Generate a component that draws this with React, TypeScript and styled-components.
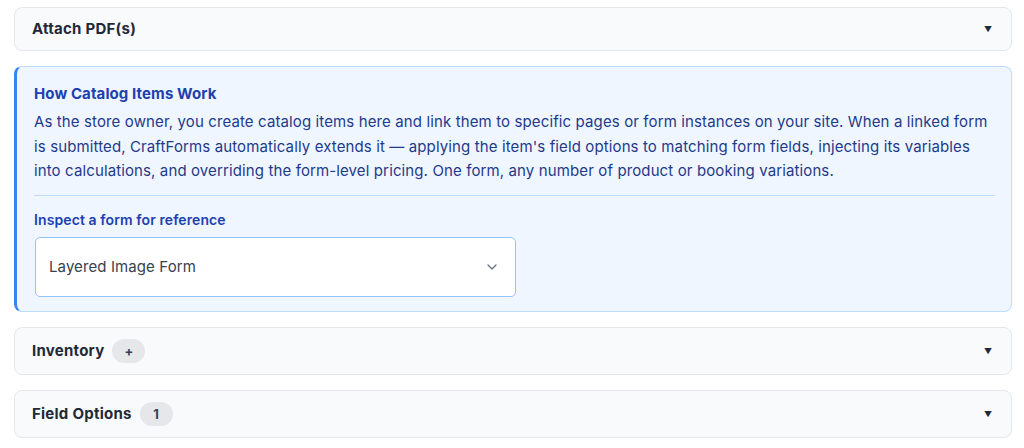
import React from "react";
import styled, { createGlobalStyle } from "styled-components";

const Global = createGlobalStyle`
  html, body { margin: 0; padding: 0; background: #ffffff; }
  body { font-family: Inter, "Noto Sans", "Liberation Sans", sans-serif; -webkit-font-smoothing: antialiased; }
  * { box-sizing: border-box; }
`;

const Page = styled.div`
  display: flex;
  flex-direction: column;
  gap: 15px;
  padding: 7px 12px 12px 14px;
`;

const Card = styled.div`
  border: 1px solid #e5e7eb;
  border-radius: 8px;
  background: #f9fafb;
`;

const Header = styled.div`
  display: flex;
  align-items: center;
  justify-content: space-between;
  padding: 11px 18px 11px 17px;
  min-height: 42px;
`;

const HeaderLeft = styled.div`
  display: flex;
  align-items: center;
  gap: 8px;
`;

const Title = styled.span`
  font-size: 15px;
  font-weight: 700;
  color: #1f2937;
  line-height: 20px;
  letter-spacing: 0.25px;
`;

const Badge = styled.span`
  display: inline-flex;
  align-items: center;
  justify-content: center;
  min-width: 33px;
  height: 24px;
  padding: 0 10px;
  border-radius: 999px;
  background: #e5e7eb;
  color: #374151;
  font-size: 13px;
  font-weight: 700;
`;

const Caret = styled.span`
  font-size: 8px;
  color: #1f2937;
  margin-right: 1px;
`;

const InfoBox = styled.div`
  background: #eff6ff;
  border: 1px solid #bfdbfe;
  border-left: 3px solid #3b82f6;
  border-radius: 8px;
  padding: 16px 16px 14px 17px;
`;

const InfoTitle = styled.div`
  font-size: 15px;
  font-weight: 700;
  color: #1e40af;
  line-height: 22px;
  margin-bottom: 5px;
  letter-spacing: 0.1px;
`;

const InfoText = styled.p`
  margin: 0;
  font-size: 15px;
  line-height: 24.5px;
  letter-spacing: 0.12px;
  color: #1e3a8a;
`;

const Divider = styled.hr`
  border: none;
  border-top: 1px solid #bfdbfe;
  margin: 11px 0 14px;
`;

const Label = styled.div`
  font-size: 14px;
  font-weight: 600;
  color: #1e40af;
  line-height: 20px;
  margin-bottom: 7px;
  letter-spacing: 0.1px;
`;

const Select = styled.div`
  width: 481px;
  height: 60px;
  margin-left: 1px;
  display: flex;
  align-items: center;
  justify-content: space-between;
  padding: 0 15px 0 13px;
  background: #ffffff;
  border: 1px solid #93c5fd;
  border-radius: 5px;
  font-size: 15px;
  letter-spacing: 0.1px;
  color: #374151;
`;

const Chevron = () => (
  <svg width="16" height="16" viewBox="0 0 24 24" fill="none" stroke="#6b7280" strokeWidth="2" strokeLinecap="round" strokeLinejoin="round">
    <path d="M6 9l6 6 6-6" />
  </svg>
);

const Section = ({ title, badge }: { title: string; badge?: string }) => (
  <Card>
    <Header>
      <HeaderLeft>
        <Title>{title}</Title>
        {badge && <Badge>{badge}</Badge>}
      </HeaderLeft>
      <Caret>▼</Caret>
    </Header>
  </Card>
);

export default function App() {
  return (
    <>
      <Global />
      <Page>
        <Section title="Attach PDF(s)" />
        <InfoBox>
          <InfoTitle>How Catalog Items Work</InfoTitle>
          <InfoText>
            As the store owner, you create catalog items here and link them to specific pages or form instances on your site. When a linked form is submitted, CraftForms automatically extends it — applying the item's field options to matching form fields, injecting its variables into calculations, and overriding the form-level pricing. One form, any number of product or booking variations.
          </InfoText>
          <Divider />
          <Label>Inspect a form for reference</Label>
          <Select>
            <span>Layered Image Form</span>
            <Chevron />
          </Select>
        </InfoBox>
        <Section title="Inventory" badge="+" />
        <Section title="Field Options" badge="1" />
      </Page>
    </>
  );
}
